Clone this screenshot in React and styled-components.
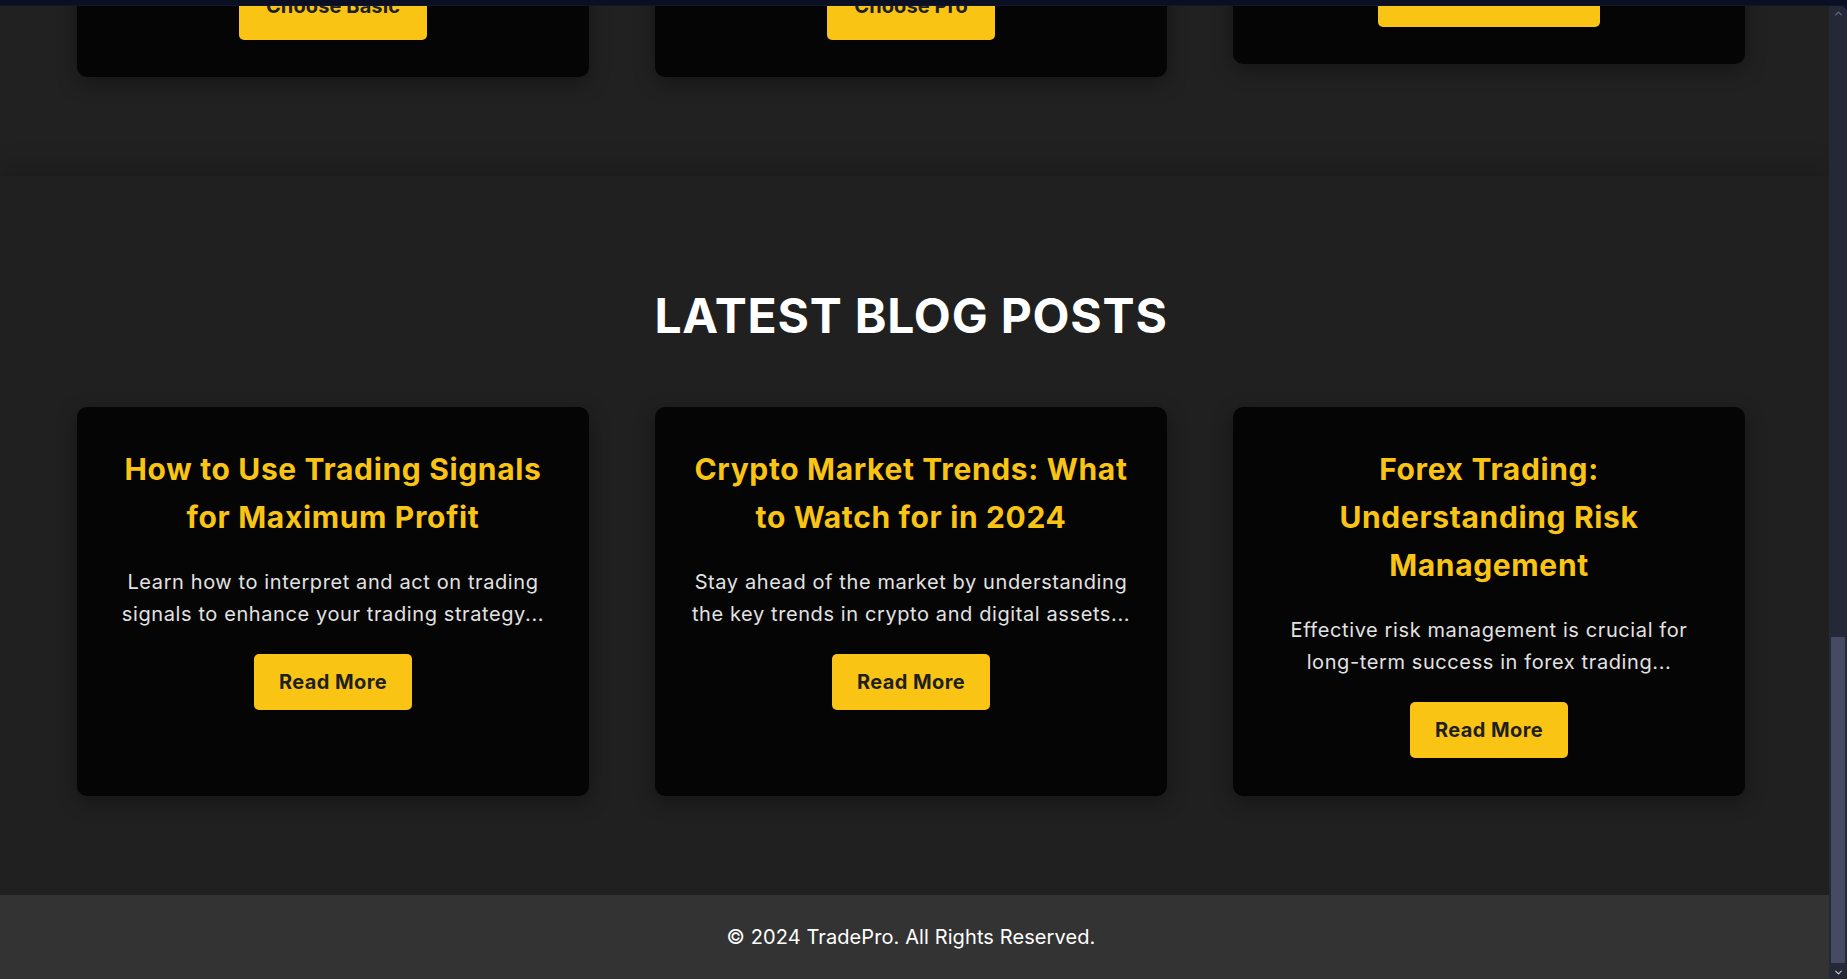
import React from "react";
import styled, { createGlobalStyle } from "styled-components";
import { ChevronUp, ChevronDown } from "lucide-react";

const GlobalStyle = createGlobalStyle`
  html, body {
    margin: 0;
    padding: 0;
    height: 100%;
    overflow: hidden;
    background: #202020;
  }
  body {
    font-family: Inter, "Open Sans", "Liberation Sans", sans-serif;
    color: #fff;
    line-height: 1.6;
  }
  * {
    box-sizing: border-box;
  }
`;

const plans = [
  { name: "Basic", price: "$29", features: ["Daily Signals", "Email Support"], cta: "Choose Basic" },
  { name: "Pro", price: "$59", features: ["Real-time Signals", "Priority Support"], cta: "Choose Pro" },
  { name: "Premium", price: "$99", features: ["VIP Signals", "1-on-1 Coaching"], cta: "Choose Premium", raised: true },
];

const posts = [
  {
    title: "How to Use Trading Signals for Maximum Profit",
    text: "Learn how to interpret and act on trading signals to enhance your trading strategy...",
  },
  {
    title: "Crypto Market Trends: What to Watch for in 2024",
    text: "Stay ahead of the market by understanding the key trends in crypto and digital assets...",
  },
  {
    title: "Forex Trading: Understanding Risk Management",
    text: "Effective risk management is crucial for long-term success in forex trading...",
  },
];

const App = () => {
  return (
    <>
      <GlobalStyle />
      <Window>
        <WindowEdge />
        <Viewport>
          <Page>
            <Pricing>
              <CardGrid $align="end">
                {plans.map((plan) => (
                  <PlanCard key={plan.name} $raised={plan.raised}>
                    <PlanName>{plan.name}</PlanName>
                    <Price>{plan.price}</Price>
                    <Features>
                      {plan.features.map((f) => (
                        <li key={f}>{f}</li>
                      ))}
                    </Features>
                    <Button $big>{plan.cta}</Button>
                  </PlanCard>
                ))}
              </CardGrid>
            </Pricing>

            <Blog>
              <SectionTitle>Latest Blog Posts</SectionTitle>
              <CardGrid>
                {posts.map((post) => (
                  <PostCard key={post.title}>
                    <PostTitle>{post.title}</PostTitle>
                    <PostText>{post.text}</PostText>
                    <Button>Read More</Button>
                  </PostCard>
                ))}
              </CardGrid>
            </Blog>

            <Footer>
              <p>© 2024 TradePro. All Rights Reserved.</p>
            </Footer>
          </Page>

          <ScrollRail>
            <RailArrow $dim>
              <ChevronUp size={11} strokeWidth={2.5} />
            </RailArrow>
            <RailTrack>
              <RailThumb />
            </RailTrack>
            <RailArrow>
              <ChevronDown size={11} strokeWidth={2.5} />
            </RailArrow>
          </ScrollRail>
        </Viewport>
      </Window>
    </>
  );
};

const Window = styled.div`
  height: 100vh;
  display: flex;
  flex-direction: column;
  background: #0a0f22;
`;

const WindowEdge = styled.div`
  height: 6px;
  flex-shrink: 0;
  background: #0a0f22;
  border-bottom: 1px solid #111630;
`;

const Viewport = styled.div`
  flex: 1;
  display: flex;
  min-height: 0;
`;

const Page = styled.main`
  flex: 1;
  display: flex;
  flex-direction: column;
  background: #202020;
  overflow: hidden;
`;

const Pricing = styled.section`
  height: 170px;
  flex-shrink: 0;
  overflow: hidden;
  display: flex;
  flex-direction: column;
  justify-content: flex-end;
  padding: 0 84px 99px 77px;
  background: #212121;
`;

const CardGrid = styled.div`
  display: grid;
  grid-template-columns: repeat(3, 1fr);
  gap: 66px;
  align-items: ${(p) => p.$align || "stretch"};
`;

const Card = styled.div`
  background: #050505;
  border-radius: 10px;
  box-shadow: 0 6px 20px rgba(0, 0, 0, 0.35);
  text-align: center;
  display: flex;
  flex-direction: column;
  align-items: center;
`;

const PlanCard = styled(Card)`
  padding: 30px 30px 37px;
  margin-bottom: ${(p) => (p.$raised ? "13px" : "0")};
`;

const PlanName = styled.h3`
  margin: 0 0 10px;
  font-size: 30px;
  color: #f9c414;
`;

const Price = styled.div`
  font-size: 40px;
  font-weight: 700;
  margin-bottom: 10px;
`;

const Features = styled.ul`
  list-style: none;
  padding: 0;
  margin: 0 0 20px;
  font-size: 20px;
  color: #ddd;
`;

const Button = styled.a`
  display: inline-block;
  background: #f9c414;
  color: #1f1f1f;
  font-size: 20px;
  font-weight: 700;
  line-height: 1.6;
  letter-spacing: ${(p) => (p.$big ? "0.1px" : "0.4px")};
  padding: ${(p) => (p.$big ? "18px 27px" : "12px 25px")};
  border-radius: 5px;
  cursor: pointer;
`;

const Blog = styled.section`
  flex-shrink: 0;
  padding: 102px 84px 99px 77px;
  background: #202020;
  box-shadow: 0 -8px 25px rgba(0, 0, 0, 0.18);
`;

const SectionTitle = styled.h2`
  margin: 0 0 52px;
  text-align: center;
  text-transform: uppercase;
  font-size: 48px;
  font-weight: 700;
  line-height: 1.6;
  letter-spacing: 0.8px;
  color: #fff;
`;

const PostCard = styled(Card)`
  padding: 38px 30px;
`;

const PostTitle = styled.h3`
  max-width: 440px;
  margin: 0 0 25px;
  font-size: 30px;
  font-weight: 700;
  line-height: 1.6;
  letter-spacing: 0.65px;
  color: #f9c414;
`;

const PostText = styled.p`
  margin: 0 0 24px;
  font-size: 20px;
  line-height: 1.6;
  letter-spacing: 0.6px;
  color: #e2e2e2;
`;

const Footer = styled.footer`
  flex: 1;
  background: #333;
  padding: 26px 84px 25px 77px;
  text-align: center;

  p {
    margin: 0;
    font-size: 20px;
    line-height: 1.6;
    letter-spacing: 0.1px;
    color: #fff;
  }
`;

const ScrollRail = styled.div`
  width: 18px;
  flex-shrink: 0;
  display: flex;
  flex-direction: column;
  background: #252837;
  border-top-right-radius: 6px;
`;

const RailArrow = styled.div`
  height: 14px;
  display: flex;
  align-items: center;
  justify-content: center;
  color: ${(p) => (p.$dim ? "#6b6e82" : "#c9cbd8")};
`;

const RailTrack = styled.div`
  flex: 1;
  display: flex;
  flex-direction: column;
  justify-content: flex-end;
  padding: 0 2px 2px;
`;

const RailThumb = styled.div`
  height: 326px;
  background: #474a63;
  border-radius: 1px;
`;

export default App;
